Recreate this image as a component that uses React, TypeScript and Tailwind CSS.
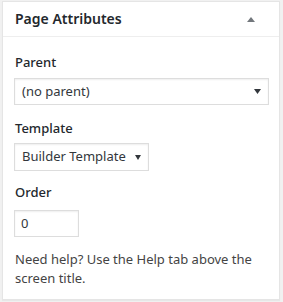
export default function App() {
  return (
    <div
      className="w-[283px] h-[302px] bg-[#f1f1f1] pl-[2px] pr-[3px] pt-[1px]"
      style={{ fontFamily: '"Noto Sans", "Open Sans", sans-serif' }}
    >
      <div className="h-[299px] bg-white border border-[#e5e5e5] shadow-[0_1px_1px_rgba(0,0,0,0.04)]">
        <div className="h-[35px] border-b border-[#eeeeee] px-[12px] flex items-center justify-between">
          <h2 className="text-[14px] font-semibold text-[#23282d] leading-none">Page Attributes</h2>
          <svg width="8" height="5" viewBox="0 0 8 5" className="mr-[12px]">
            <path d="M0 5 L4 0 L8 5 Z" fill="#72777c" />
          </svg>
        </div>
        <div className="pl-[11px] pt-[15px] text-[13px] text-[#444]">
          <p className="leading-[20px] font-medium text-[#23282d] pl-px">Parent</p>
          <div className="mt-[6px] w-[255px] h-[27px] border border-[#dddddd] shadow-[inset_0_1px_2px_rgba(0,0,0,0.07)] flex items-center justify-between pl-[7px] pr-[7px] text-[#32373c]">
            <span>(no parent)</span>
            <svg width="7" height="5" viewBox="0 0 7 5">
              <path d="M0 0 L7 0 L3.5 5 Z" fill="#32373c" />
            </svg>
          </div>
          <p className="mt-[13px] leading-[20px] font-medium text-[#23282d] pl-px">Template</p>
          <div className="mt-[5px] w-[135px] h-[28px] border border-[#dddddd] shadow-[inset_0_1px_2px_rgba(0,0,0,0.07)] flex items-center justify-between pl-[7px] pr-[7px] text-[#32373c]">
            <span>Builder Template</span>
            <svg width="6" height="5" viewBox="0 0 6 5">
              <path d="M0 0 L6 0 L3 5 Z" fill="#32373c" />
            </svg>
          </div>
          <p className="mt-[11px] leading-[20px] font-medium text-[#23282d] pl-px">Order</p>
          <div className="mt-[8px] w-[65px] h-[27px] border border-[#dddddd] shadow-[inset_0_1px_2px_rgba(0,0,0,0.07)] flex items-center pl-[6px] text-[#32373c]">
            0
          </div>
          <p className="mt-[13px] leading-[19px] pl-px pr-[12px]">
            Need help? Use the Help tab above the screen title.
          </p>
        </div>
      </div>
    </div>
  );
}
